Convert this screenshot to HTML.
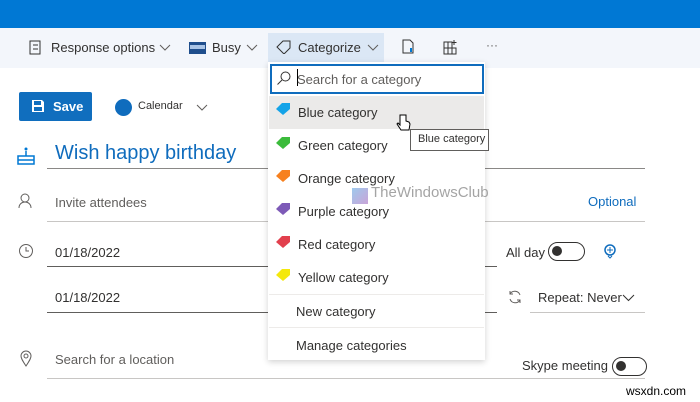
<!DOCTYPE html><html><head><style>
*{margin:0;padding:0;box-sizing:border-box}
body{width:700px;height:402px;overflow:hidden;background:#fff;font-family:"Liberation Sans",sans-serif;position:relative;color:#323130}
.a{position:absolute;white-space:nowrap}
.t{font-size:13px}
.line{position:absolute;height:1px;background:#8a8886}
.tag{position:absolute;left:276px;width:14px;height:12px}
.tog{position:absolute;border:1.5px solid #323130;border-radius:10px}
.tog:after{content:"";position:absolute;left:3px;top:3px;width:10px;height:10px;border-radius:50%;background:#323130}
</style></head><body>
<div class="a" style="left:0;top:0;width:700px;height:28px;background:#0078d4"></div>
<div class="a" style="left:0;top:28px;width:700px;height:40px;background:#f3f6fb"></div>
<div class="a" style="left:268px;top:33px;width:116px;height:35px;background:#dbe7f5"></div>
<svg class="a" style="left:28px;top:40px" width="14" height="16"><rect x="2" y="1" width="10" height="13" fill="none" stroke="#323130"/><path d="M5 5h5M5 9h5" stroke="#323130"/></svg>
<div class="a t" style="left:51px;top:40px">Response options</div>
<svg class="a" style="left:159px;top:44px" width="12" height="8"><path d="M1 1l5 5 5-5" fill="none" stroke="#605e5c"/></svg>
<div class="a" style="left:189px;top:42px;width:17px;height:12px;background:#1f4e8c"></div>
<div class="a" style="left:190px;top:45px;width:15px;height:4px;background:#a9c4e6"></div>
<div class="a t" style="left:212px;top:40px">Busy</div>
<svg class="a" style="left:246px;top:44px" width="12" height="8"><path d="M1 1l5 5 5-5" fill="none" stroke="#605e5c"/></svg>
<svg class="a" style="left:276px;top:40px" width="16" height="14"><path d="M1 7l6-6h7v7l-6 6z" fill="none" stroke="#323130"/></svg>
<div class="a t" style="left:298px;top:40px">Categorize</div>
<svg class="a" style="left:367px;top:44px" width="12" height="8"><path d="M1 1l5 5 5-5" fill="none" stroke="#605e5c"/></svg>
<svg class="a" style="left:401px;top:39px" width="14" height="16"><path d="M2 1h7l3 3v10H2z" fill="none" stroke="#323130"/><path d="M10 9v4" stroke="#0078d4" stroke-width="2"/></svg>
<svg class="a" style="left:443px;top:39px" width="16" height="16"><path d="M1 3h8v12H1zM1 9h12v6H5M5 3v12M11 1v5M8.5 3.5h5" fill="none" stroke="#323130"/></svg>
<div class="a" style="left:486px;top:38px;font-size:12px;color:#605e5c">···</div>
<div class="a" style="left:19px;top:92px;width:73px;height:29px;background:#0f6cbd;background:#106ebe;border-radius:2px"></div>
<svg class="a" style="left:31px;top:99px" width="14" height="14"><path d="M1 1h10l2 2v10H1z" fill="#fff"/><rect x="3" y="2" width="7" height="4" fill="#106ebe"/><rect x="3" y="8" width="8" height="4" fill="#106ebe"/></svg>
<div class="a" style="left:53px;top:99px;font-size:13px;font-weight:bold;color:#fff">Save</div>
<div class="a" style="left:115px;top:99px;width:17px;height:17px;border-radius:50%;background:#0f6cbd"></div>
<div class="a" style="left:138px;top:100px;font-size:11px">Calendar</div>
<svg class="a" style="left:196px;top:104px" width="12" height="8"><path d="M1 1l5 5 5-5" fill="none" stroke="#605e5c"/></svg>
<svg class="a" style="left:16px;top:144px" width="20" height="22"><path d="M2 12h16v8H2zM2 16h16M10 12V7" fill="none" stroke="#0078d4" stroke-width="1.5"/><circle cx="10" cy="5" r="1.5" fill="#0078d4"/></svg>
<div class="a" style="left:55px;top:142px;font-size:20px;color:#0f6cbd">Wish happy birthday</div>
<div class="line" style="left:47px;top:168px;width:598px"></div>
<svg class="a" style="left:18px;top:193px" width="14" height="16"><circle cx="7" cy="5" r="4" fill="none" stroke="#605e5c"/><path d="M1 15c0-4 3-6 6-6s6 2 6 6" fill="none" stroke="#605e5c"/></svg>
<div class="a t" style="left:55px;top:195px;color:#605e5c">Invite attendees</div>
<div class="a t" style="left:588px;top:194px;color:#0f6cbd">Optional</div>
<div class="line" style="left:47px;top:221px;width:598px;background:#c8c6c4"></div>
<svg class="a" style="left:18px;top:243px" width="16" height="16"><circle cx="8" cy="8" r="6.5" fill="none" stroke="#605e5c"/><path d="M8 4v4h3" fill="none" stroke="#605e5c"/></svg>
<div class="a t" style="left:55px;top:245px">01/18/2022</div>
<div class="line" style="left:47px;top:266px;width:450px;background:#605e5c"></div>
<div class="a t" style="left:506px;top:245px">All day</div>
<div class="tog" style="left:548px;top:242px;width:37px;height:19px"></div>
<svg class="a" style="left:603px;top:243px" width="14" height="16"><circle cx="7" cy="7" r="5" fill="none" stroke="#0f6cbd" stroke-width="1.5"/><path d="M4 7h6M7 4v6M5 13l2 2 2-2" fill="none" stroke="#0f6cbd"/></svg>
<div class="a t" style="left:55px;top:290px">01/18/2022</div>
<div class="line" style="left:47px;top:312px;width:450px;background:#605e5c"></div>
<svg class="a" style="left:507px;top:289px" width="16" height="16"><path d="M13 6a5.5 5.5 0 0 0-10-1M3 10a5.5 5.5 0 0 0 10 1M3 2v3h3M13 14v-3h-3" fill="none" stroke="#605e5c"/></svg>
<div class="a t" style="left:538px;top:290px">Repeat: Never</div>
<svg class="a" style="left:622px;top:294px" width="13" height="8"><path d="M1 1l5.5 5.5 5.5-5.5" fill="none" stroke="#323130"/></svg>
<div class="line" style="left:530px;top:312px;width:115px;background:#c8c6c4"></div>
<svg class="a" style="left:20px;top:350px" width="12" height="18"><path d="M6 16C2 10 1 8 1 6a5 5 0 0 1 10 0c0 2-1 4-5 10z" fill="none" stroke="#605e5c"/><circle cx="6" cy="6" r="2" fill="none" stroke="#605e5c"/></svg>
<div class="a t" style="left:55px;top:352px;color:#605e5c">Search for a location</div>
<div class="a t" style="left:522px;top:358px">Skype meeting</div>
<div class="tog" style="left:612px;top:357px;width:35px;height:19px"></div>
<div class="line" style="left:47px;top:378px;width:598px;background:#c8c6c4"></div>
<div class="a" style="left:626px;top:384px;font-size:12px;color:#000">wsxdn.com</div>
<!-- dropdown -->
<div class="a" style="left:268px;top:62px;width:217px;height:298px;background:#fff;box-shadow:0 2px 6px rgba(0,0,0,.18)"></div>
<div class="a" style="left:270px;top:64px;width:214px;height:30px;border:2px solid #0f6cbd;background:#fff"></div>
<svg class="a" style="left:276px;top:70px" width="16" height="16"><circle cx="9.5" cy="6.5" r="4.5" fill="none" stroke="#323130"/><path d="M6 10l-4.5 4.5" stroke="#323130"/></svg>
<div class="a" style="left:297px;top:69px;width:1px;height:17px;background:#000"></div>
<div class="a t" style="left:297px;top:72px;color:#605e5c">Search for a category</div>
<div class="a" style="left:269px;top:96px;width:215px;height:33px;background:#ebeae9"></div>
<svg class="tag" style="top:103px"><path d="M0 6l6-6h8v6l-7 6z" fill="#14a3e8"/></svg>
<div class="a t" style="left:298px;top:105px">Blue category</div>
<svg class="tag" style="top:137px"><path d="M0 6l6-6h8v6l-7 6z" fill="#3bbb3b"/></svg>
<div class="a t" style="left:298px;top:138px">Green category</div>
<svg class="tag" style="top:170px"><path d="M0 6l6-6h8v6l-7 6z" fill="#f7801e"/></svg>
<div class="a t" style="left:298px;top:171px">Orange category</div>
<svg class="tag" style="top:203px"><path d="M0 6l6-6h8v6l-7 6z" fill="#7d5ab7"/></svg>
<div class="a t" style="left:298px;top:204px">Purple category</div>
<svg class="tag" style="top:236px"><path d="M0 6l6-6h8v6l-7 6z" fill="#e2404d"/></svg>
<div class="a t" style="left:298px;top:237px">Red category</div>
<svg class="tag" style="top:269px"><path d="M0 6l6-6h8v6l-7 6z" fill="#f4e80c"/></svg>
<div class="a t" style="left:298px;top:270px">Yellow category</div>
<div class="a" style="left:269px;top:294px;width:215px;height:1px;background:#edebe9"></div>
<div class="a t" style="left:296px;top:304px">New category</div>
<div class="a" style="left:269px;top:327px;width:215px;height:1px;background:#edebe9"></div>
<div class="a t" style="left:296px;top:338px">Manage categories</div>
<div class="a" style="left:352px;top:188px;width:16px;height:16px;background:linear-gradient(135deg,#9ec9ec,#c9a4d8)"></div>
<div class="a" style="left:371px;top:184px;font-size:15px;color:#8e8e8e;opacity:.8">TheWindowsClub</div>
<div class="a" style="left:410px;top:129px;width:79px;height:22px;border:1px solid #605e5c;background:#fff;font-size:11px;padding:3px 0 0 7px">Blue category</div>
<svg class="a" style="left:396px;top:113px" width="16" height="20"><path d="M4 2v10l-2-2-1 1 4 6h8l1-6-1-2-3-1V2z" fill="#fff" stroke="#000"/></svg>
</body></html>
